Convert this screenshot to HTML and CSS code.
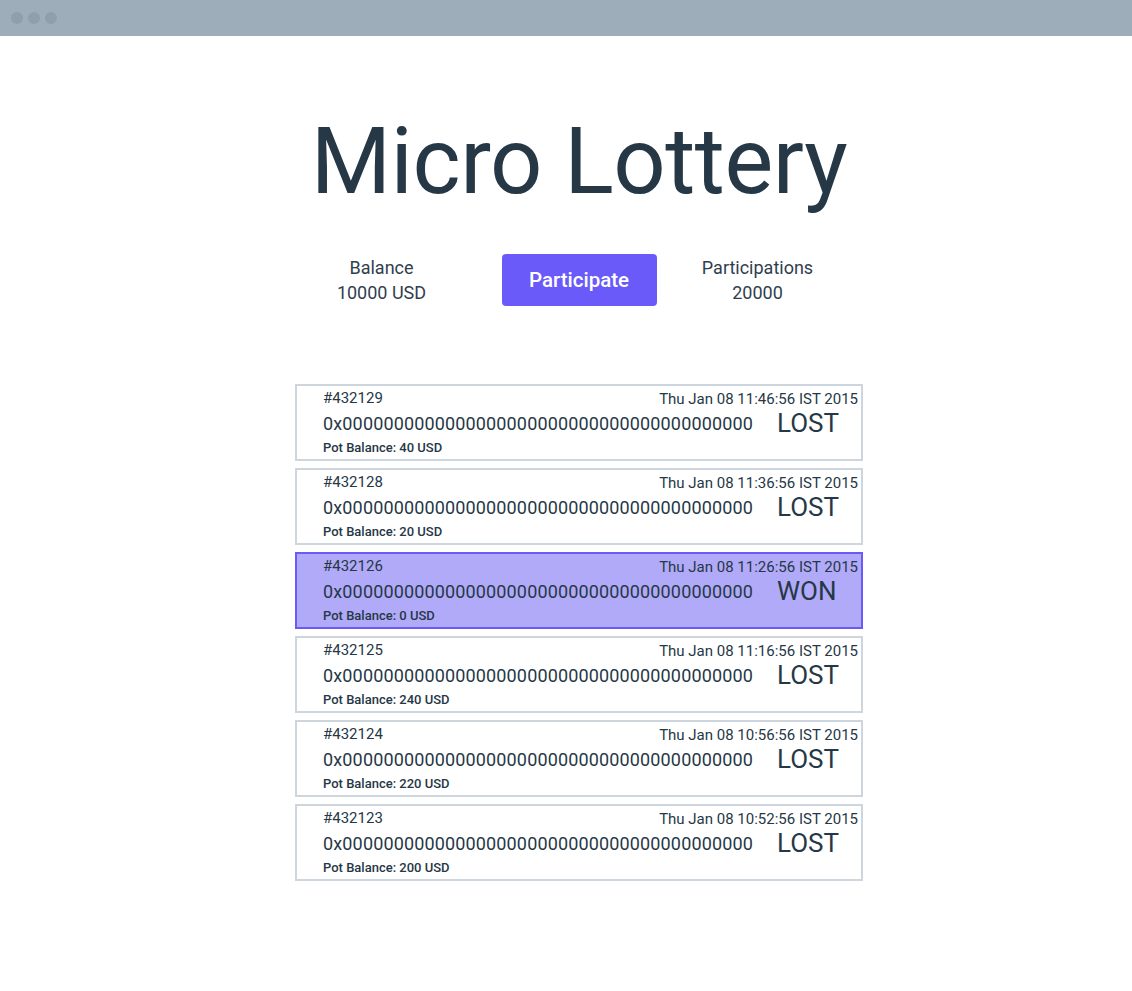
FILE: index.html
```html
<!DOCTYPE html>
<html lang="en">
<head>
<meta charset="utf-8">
<title>Micro Lottery</title>
<link rel="stylesheet" href="styles.css">
</head>
<body>
<div class="topbar">
  <span class="dot"></span><span class="dot"></span><span class="dot"></span>
</div>
<main class="page">
  <h1 class="title">Micro Lottery</h1>
  <section class="stats">
    <div class="stat"><div>Balance</div><div>10000 USD</div></div>
    <button class="btn">Participate</button>
    <div class="stat stat-right"><div>Participations</div><div>20000</div></div>
  </section>
  <section class="list">
    <div class="card">
      <div class="row1"><span class="id">#432129</span><span class="date">Thu Jan 08 11:46:56 IST 2015</span></div>
      <div class="row2"><span class="hash">0x0000000000000000000000000000000000000000</span><span class="status">LOST</span></div>
      <div class="row3">Pot Balance: 40 USD</div>
    </div>
    <div class="card">
      <div class="row1"><span class="id">#432128</span><span class="date">Thu Jan 08 11:36:56 IST 2015</span></div>
      <div class="row2"><span class="hash">0x0000000000000000000000000000000000000000</span><span class="status">LOST</span></div>
      <div class="row3">Pot Balance: 20 USD</div>
    </div>
    <div class="card won">
      <div class="row1"><span class="id">#432126</span><span class="date">Thu Jan 08 11:26:56 IST 2015</span></div>
      <div class="row2"><span class="hash">0x0000000000000000000000000000000000000000</span><span class="status">WON</span></div>
      <div class="row3">Pot Balance: 0 USD</div>
    </div>
    <div class="card">
      <div class="row1"><span class="id">#432125</span><span class="date">Thu Jan 08 11:16:56 IST 2015</span></div>
      <div class="row2"><span class="hash">0x0000000000000000000000000000000000000000</span><span class="status">LOST</span></div>
      <div class="row3">Pot Balance: 240 USD</div>
    </div>
    <div class="card">
      <div class="row1"><span class="id">#432124</span><span class="date">Thu Jan 08 10:56:56 IST 2015</span></div>
      <div class="row2"><span class="hash">0x0000000000000000000000000000000000000000</span><span class="status">LOST</span></div>
      <div class="row3">Pot Balance: 220 USD</div>
    </div>
    <div class="card">
      <div class="row1"><span class="id">#432123</span><span class="date">Thu Jan 08 10:52:56 IST 2015</span></div>
      <div class="row2"><span class="hash">0x0000000000000000000000000000000000000000</span><span class="status">LOST</span></div>
      <div class="row3">Pot Balance: 200 USD</div>
    </div>
  </section>
</main>
</body>
</html>
```
FILE: styles.css
```css
* { box-sizing: border-box; }
html, body { margin: 0; padding: 0; background: #ffffff; }
body {
  font-family: Roboto, "Liberation Sans", sans-serif;
  color: #263746;
}
.topbar {
  height: 36px;
  background: #9eadba;
  display: flex;
  align-items: center;
  gap: 5px;
  padding-left: 11px;
}
.dot {
  width: 12px;
  height: 12px;
  border-radius: 50%;
  background: #909fad;
}
.page {
  display: flex;
  flex-direction: column;
  align-items: center;
  padding-left: 26px;
}
.title {
  margin: 72px 0 0 0;
  font-weight: 400;
  font-size: 92px;
  line-height: 108px;
  color: #263746;
  letter-spacing: -0.5px;
}
.stats {
  margin-top: 38px;
  display: flex;
  align-items: center;
  gap: 40px;
}
.stat {
  width: 160px;
  text-align: center;
  font-size: 18px;
  line-height: 25px;
  color: #2f3e4d;
}
.stat-right {
  padding-right: 38px;
}
.btn {
  width: 155px;
  height: 52px;
  border: none;
  border-radius: 4px;
  background: #6a5af9;
  color: #ffffff;
  font-family: inherit;
  font-size: 20.5px;
  font-weight: 500;
}
.list {
  margin-top: 78px;
  width: 568px;
  display: flex;
  flex-direction: column;
  gap: 7px;
}
.card {
  height: 77px;
  border: 2px solid #cdd6df;
  padding: 0 3px 0 26px;
  display: flex;
  flex-direction: column;
}
.card.won {
  background: #b0aaf8;
  border-color: #6a5af9;
}
.row1 {
  height: 24px;
  display: flex;
  justify-content: space-between;
  align-items: center;
  font-size: 15px;
}
.date {
  padding-top: 2px;
}
.row2 {
  height: 26px;
  display: flex;
  align-items: center;
}
.hash {
  font-size: 18px;
  letter-spacing: 0.15px;
}
.status {
  margin-left: 24px;
  font-size: 26px;
}
.row3 {
  height: 23px;
  display: flex;
  align-items: center;
  font-size: 13px;
  font-weight: 500;
}
```
